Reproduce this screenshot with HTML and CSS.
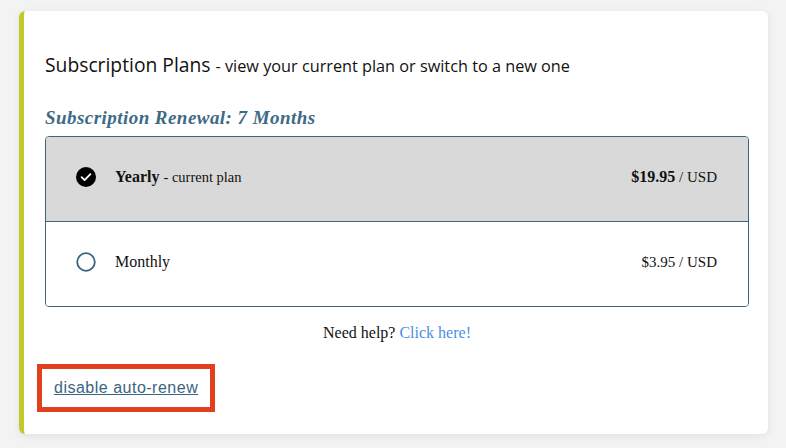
FILE: index.html
```html
<!DOCTYPE html>
<html>
<head>
<meta charset="utf-8">
<link rel="stylesheet" href="styles.css">
</head>
<body>
<div class="card">
  <h2 class="title">Subscription Plans <span class="sub">- view your current plan or switch to a new one</span></h2>
  <div class="renewal">Subscription Renewal: 7 Months</div>
  <div class="plans">
    <div class="plan current">
      <svg class="icon" width="20" height="20" viewBox="0 0 20 20"><circle cx="10" cy="10" r="10" fill="#000"/><path d="M5.6 10.2 L8.6 13.1 L14.4 7.2" fill="none" stroke="#fff" stroke-width="1.8" stroke-linecap="round" stroke-linejoin="round"/></svg>
      <div class="name"><b>Yearly</b> <span class="note">- current plan</span></div>
      <div class="price"><b>$19.95</b> / USD</div>
    </div>
    <div class="plan">
      <svg class="icon" width="20" height="20" viewBox="0 0 20 20"><circle cx="10" cy="10" r="8.8" fill="none" stroke="#3a6480" stroke-width="1.8"/></svg>
      <div class="name">Monthly</div>
      <div class="price">$3.95 / USD</div>
    </div>
  </div>
  <div class="help">Need help? <a href="#">Click here!</a></div>
  <div class="disable-box"><a href="#" class="disable">disable auto-renew</a></div>
</div>
</body>
</html>
```
FILE: styles.css
```css
html, body {
  margin: 0;
  padding: 0;
}
body {
  background: #f3f3f3;
  width: 786px;
  height: 448px;
  overflow: hidden;
}
.card {
  margin: 11px 0 0 19px;
  width: 704px;
  padding: 41px 19px 22px 21px;
  background: #fff;
  border-left: 5px solid #c2c92c;
  border-radius: 6px;
  box-shadow: 0 2px 8px rgba(0,0,0,0.08);
}
.title {
  margin: 0;
  font-family: "Open Sans", sans-serif;
  font-weight: 400;
  font-size: 19.3px;
  line-height: 26px;
  color: #111;
}
.title .sub {
  font-size: 16.25px;
}
.renewal {
  margin-top: 28px;
  font-family: "Liberation Serif", serif;
  font-weight: bold;
  font-style: italic;
  font-size: 19px;
  line-height: 21px;
  color: #3e6a85;
  letter-spacing: 0.45px;
}
.plans {
  margin-top: 8px;
  border: 1px solid #3a6480;
  border-radius: 4px;
  overflow: hidden;
  font-family: "Liberation Serif", serif;
  font-size: 16px;
  color: #111;
}
.plan {
  display: flex;
  align-items: center;
  height: 84px;
  box-sizing: border-box;
  padding: 0 31px 4px 30px;
  background: #fff;
}
.plan.current {
  background: #d9d9d9;
  border-bottom: 1px solid #3a6480;
  height: 85px;
}
.icon {
  flex: none;
  display: block;
}
.name {
  margin-left: 19px;
  flex: 1;
}
.note {
  font-size: 14.5px;
}
.price {
  font-size: 15px;
}
.price b {
  font-size: 16px;
}
.help {
  margin-top: 16px;
  text-align: center;
  font-family: "Liberation Serif", serif;
  font-size: 16px;
  line-height: 20px;
  color: #111;
}
.help a {
  color: #4a90e2;
  text-decoration: none;
}
.disable-box {
  margin: 21px 0 0 -8px;
  display: inline-block;
  border: 5px solid #e0401e;
  padding: 10px 12px 10px 12px;
}
.disable {
  display: block;
  font-family: "Liberation Sans", sans-serif;
  font-size: 16px;
  line-height: 18px;
  letter-spacing: 0.5px;
  color: #3a6480;
  text-decoration: underline;
}
```
